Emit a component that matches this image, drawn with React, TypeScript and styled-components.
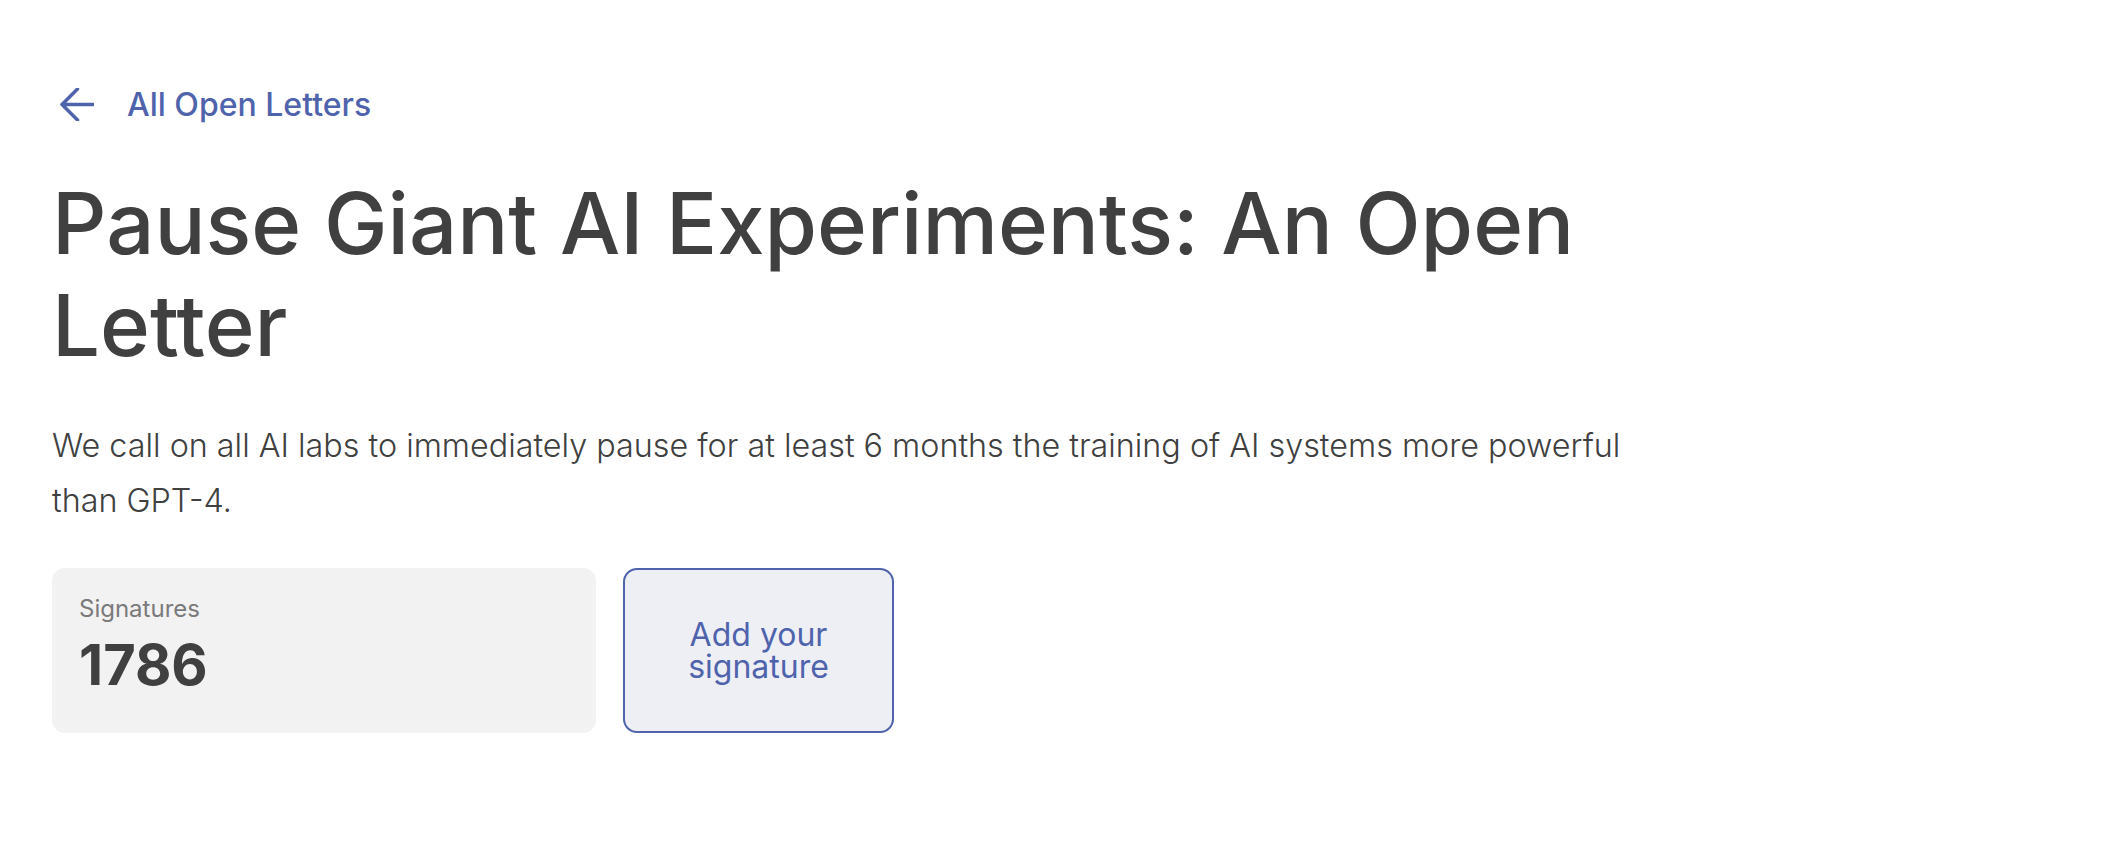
import styled, { createGlobalStyle } from "styled-components"

const GlobalStyle = createGlobalStyle`
    body {
        margin: 0;
        background: #ffffff;
        font-family: Inter, "Noto Sans", sans-serif;
        color: #404040;
    }
`

const Page = styled.main`
    padding: 82px 0 0 52px;
    max-width: 1620px;
`

const BackLink = styled.a`
    display: flex;
    align-items: center;
    gap: 33px;
    height: 45px;
    color: #4f63ad;
    font-size: 32px;
    font-weight: 500;
    text-decoration: none;
    padding-left: 8px;
`

const Title = styled.h1`
    margin: 46px 0 0 0;
    font-size: 85px;
    line-height: 102px;
    font-weight: 500;
    color: #404040;
`

const Intro = styled.p`
    margin: 41px 0 0 0;
    font-size: 32.3px;
    line-height: 55px;
    font-weight: 300;
    color: #404040;
`

const Actions = styled.div`
    display: flex;
    gap: 27px;
    margin-top: 40px;
`

const CountCard = styled.div`
    width: 544px;
    height: 165px;
    box-sizing: border-box;
    padding: 26px 27px;
    background: #f2f2f2;
    border-radius: 13px;
`

const CountLabel = styled.div`
    font-size: 24px;
    line-height: 29px;
    color: #7a7a7a;
`

const CountValue = styled.div`
    margin-top: 9px;
    font-size: 56px;
    line-height: 67px;
    font-weight: 700;
    color: #404040;
`

const SignButton = styled.button`
    width: 271px;
    height: 165px;
    box-sizing: border-box;
    padding: 0 40px;
    background: #eeeff5;
    border: 2px solid #4f63ad;
    border-radius: 14px;
    color: #4f63ad;
    font-family: Inter, "Noto Sans", sans-serif;
    font-size: 32px;
    line-height: 32px;
    font-weight: 400;
    cursor: pointer;
`

const ArrowLeft = () => (
    <svg width="34" height="33" viewBox="0 0 34 33" fill="none">
        <path d="M33 16.5H2 M17.5 1 L2 16.5 L17.5 32" stroke="#4f63ad" strokeWidth="3.5" strokeLinecap="round" strokeLinejoin="round" />
    </svg>
)

export default function App() {
    return (
        <>
            <GlobalStyle />
            <Page>
                <BackLink href="#">
                    <ArrowLeft />
                    All Open Letters
                </BackLink>

                <Title>Pause Giant AI Experiments: An Open Letter</Title>

                <Intro>
                    We call on all AI labs to immediately pause for at least 6 months the training of AI systems more powerful than GPT-4.
                </Intro>

                <Actions>
                    <CountCard>
                        <CountLabel>Signatures</CountLabel>
                        <CountValue>1786</CountValue>
                    </CountCard>
                    <SignButton>Add your signature</SignButton>
                </Actions>
            </Page>
        </>
    )
}
